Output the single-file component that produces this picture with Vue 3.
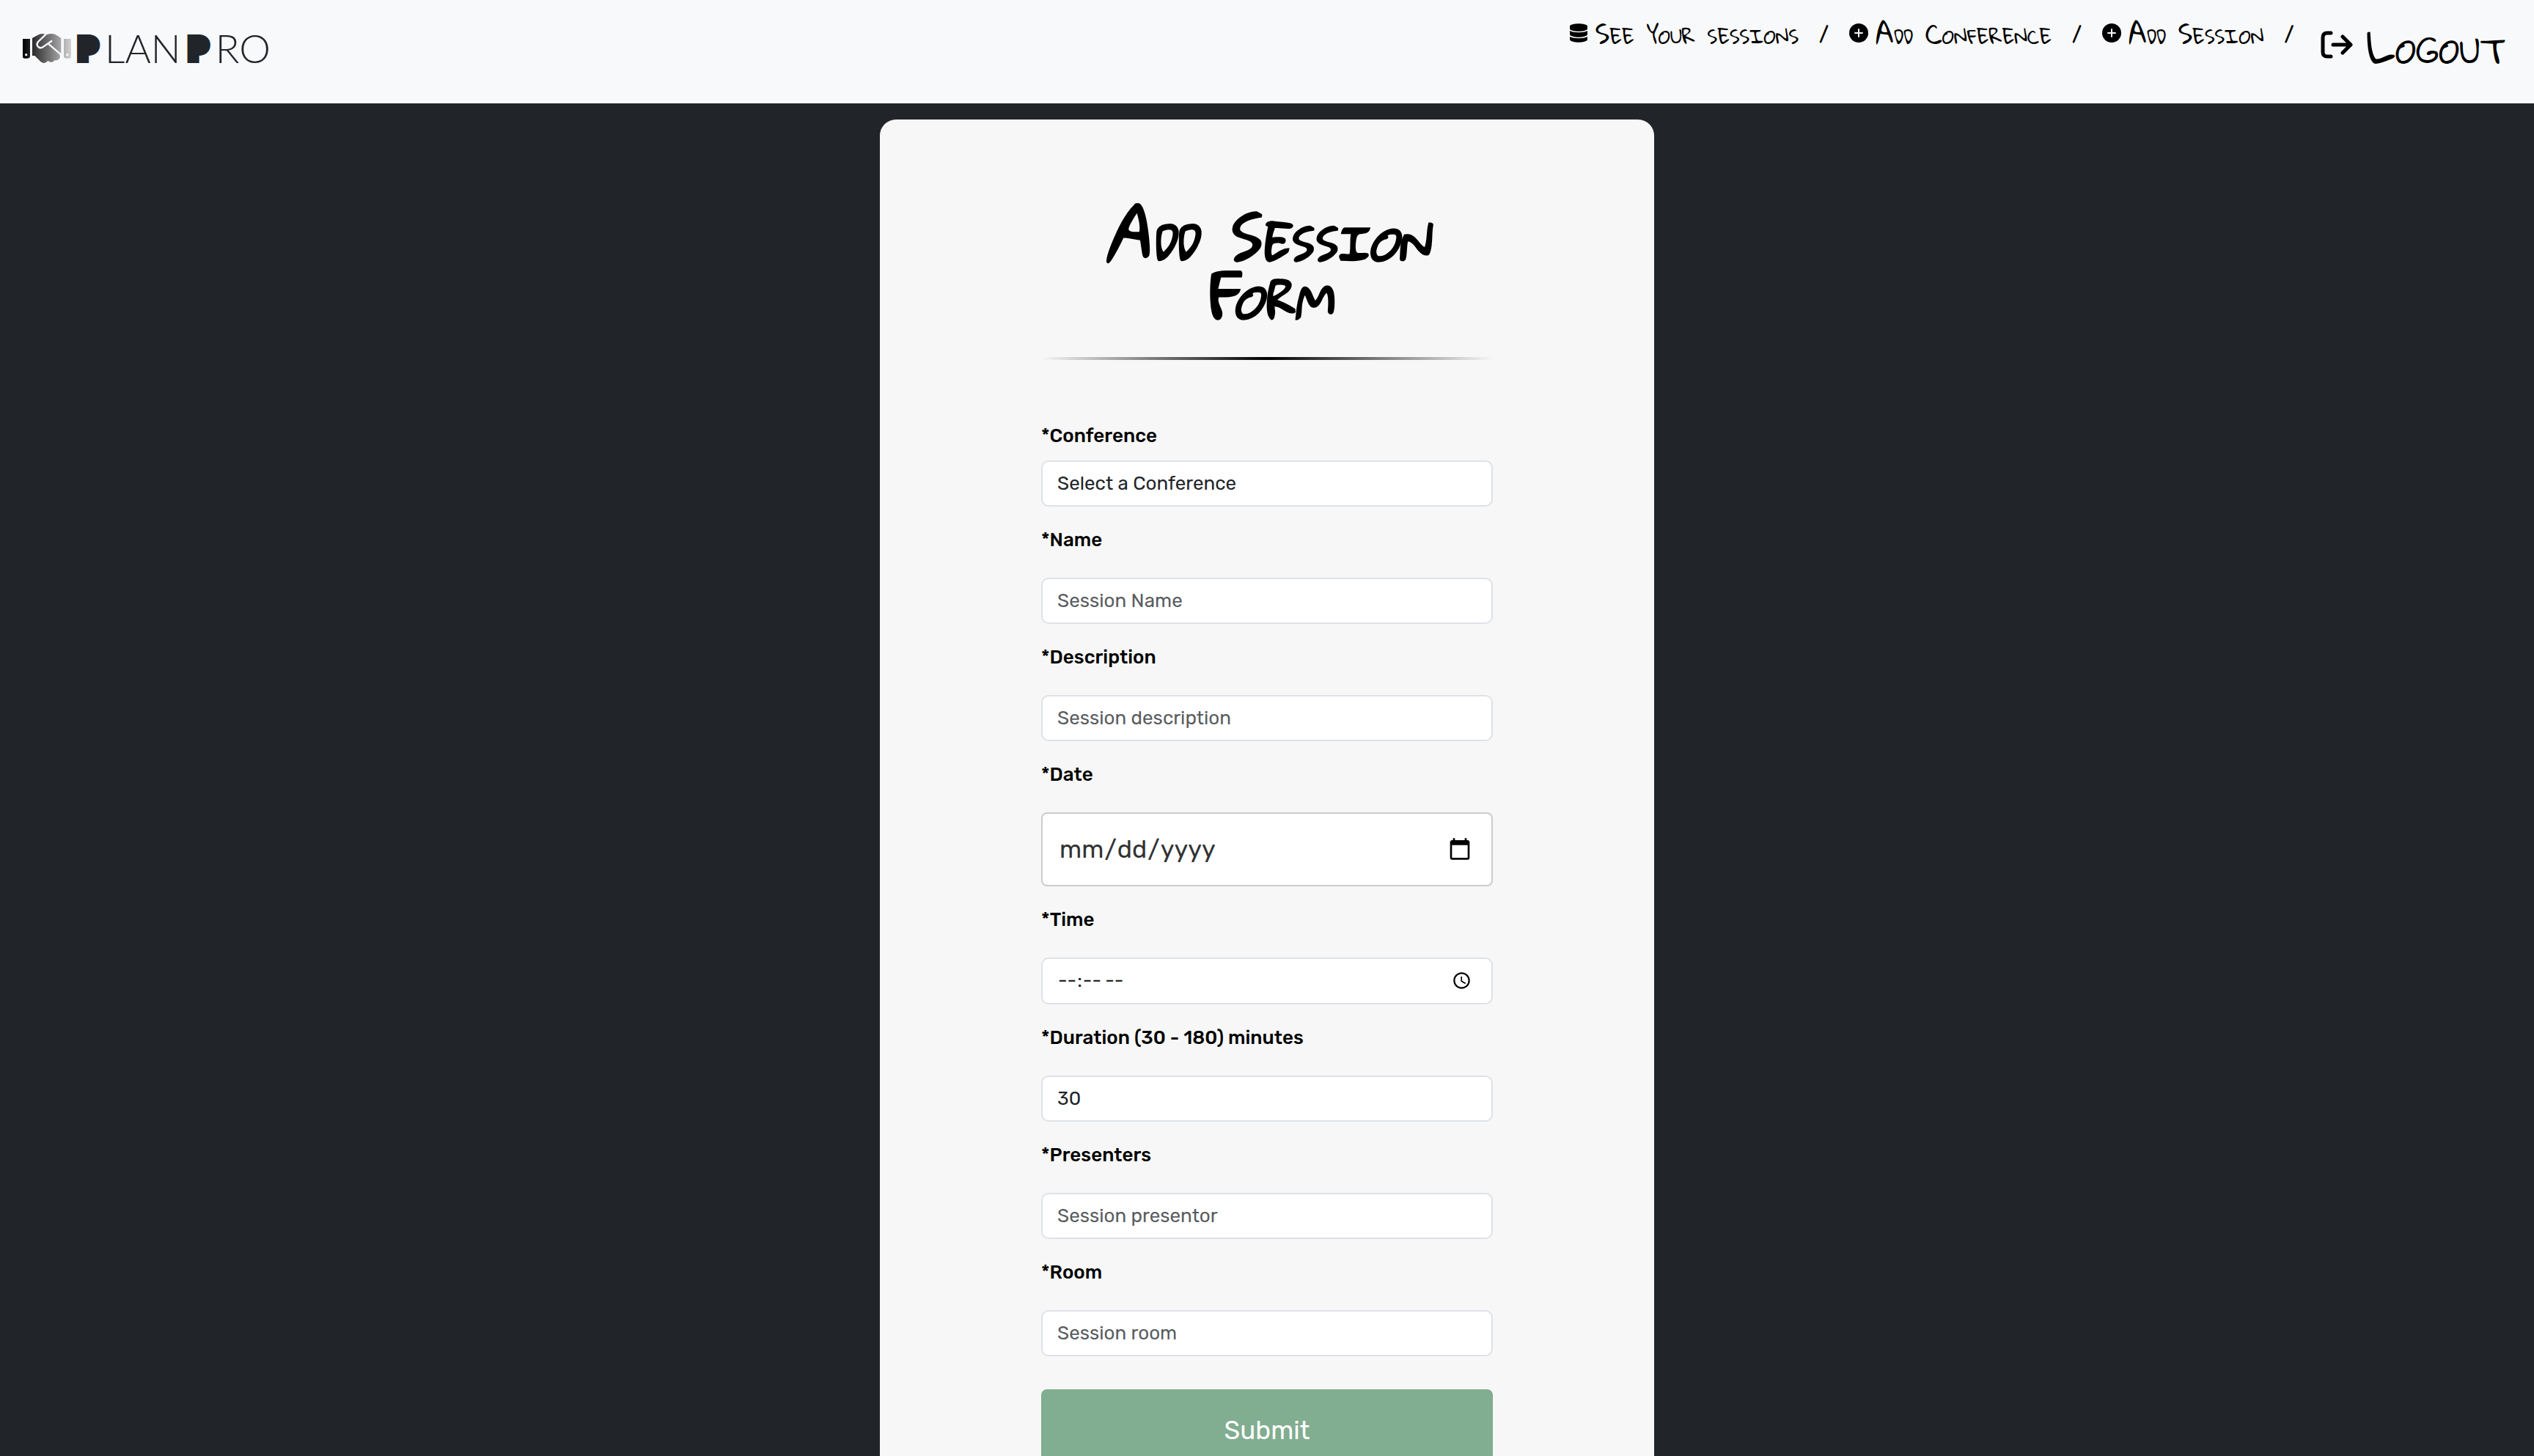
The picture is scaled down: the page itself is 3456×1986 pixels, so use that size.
<script setup>
import { ref } from 'vue'

const conference = ref('')
const duration = ref(30)
</script>

<template>
  <header class="topbar">
    <a class="brand" href="#" aria-label="PlanPro">
      <svg class="brand-mark" viewBox="93 132 198 126" aria-hidden="true">
        <defs>
          <linearGradient id="mark-shade" gradientUnits="userSpaceOnUse" x1="93" y1="0" x2="291" y2="0">
            <stop offset="0" stop-color="#000" />
            <stop offset="1" stop-color="#d2d2d2" />
          </linearGradient>
        </defs>
        <g fill="url(#mark-shade)">
          <path d="M93 156h30v70q0 10-10 10h-12q-8 0-8-8z" />
          <path d="M261 156h30v72q0 8-8 8h-12q-10 0-10-10z" />
          <path d="M132 153L155 140Q169 132 184 137L192 139Q210 131 228 139L250 153V215L243 218Q250 232 240 240Q232 246 224 243Q218 253 208 251Q200 250 196 245Q188 256 178 255Q172 254 166 249L142 225H132Z" />
        </g>
        <g fill="none" stroke="#f8f9fa" stroke-width="7" stroke-linecap="round">
          <path d="M186 139L156 168Q147 180 157 189Q167 197 178 188L211 165" />
          <path d="M200 178L250 221" />
        </g>
        <circle cx="107" cy="221" r="5" fill="#f8f9fa" />
        <circle cx="275" cy="221" r="5" fill="#f8f9fa" />
      </svg>
      <span class="brand-name"><b>P</b><span>LAN</span><b>P</b><span>RO</span></span>
    </a>

    <nav class="links">
      <a class="link" href="#">
        <svg class="icon" viewBox="0 0 24 26" aria-hidden="true">
          <path d="M0 4C0-1 24-1 24 4v3C24 12 0 12 0 7zM0 10c5 3 19 3 24 0v5c-2 5-22 5-24 0zM0 18c5 3 19 3 24 0v4c-2 5-22 5-24 0z" />
        </svg>
        <span>See your sessions</span>
      </a>
      <span class="slash">/</span>
      <a class="link" href="#">
        <svg class="icon" viewBox="0 0 26 26" aria-hidden="true">
          <circle cx="13" cy="13" r="13" />
          <path d="M13 8v10M8 13h10" stroke="#f8f9fa" stroke-width="2" stroke-linecap="round" />
        </svg>
        <span>Add Conference</span>
      </a>
      <span class="slash">/</span>
      <a class="link" href="#">
        <svg class="icon" viewBox="0 0 26 26" aria-hidden="true">
          <circle cx="13" cy="13" r="13" />
          <path d="M13 8v10M8 13h10" stroke="#f8f9fa" stroke-width="2" stroke-linecap="round" />
        </svg>
        <span>Add Session</span>
      </a>
      <span class="slash">/</span>
      <button class="logout" type="button">
        <svg class="logout-icon" viewBox="0 0 44 38" aria-hidden="true">
          <path d="M14 3H9Q3 3 3 9v20q0 6 6 6h5M17 19h24M30 8l11 11-11 11" fill="none" stroke="#000" stroke-width="5" stroke-linecap="round" stroke-linejoin="round" />
        </svg>
        <span>Logout</span>
      </button>
    </nav>
  </header>

  <main class="page">
    <form class="card" @submit.prevent>
      <h1 class="title">Add Session Form</h1>
      <hr class="rule" />

      <div class="field compact">
        <label for="conference">*Conference</label>
        <select id="conference" v-model="conference" class="control">
          <option value="">Select a Conference</option>
        </select>
      </div>
      <div class="field">
        <label for="name">*Name</label>
        <input id="name" class="control" type="text" placeholder="Session Name" />
      </div>
      <div class="field">
        <label for="description">*Description</label>
        <input id="description" class="control" type="text" placeholder="Session description" />
      </div>
      <div class="field">
        <label for="date">*Date</label>
        <input id="date" class="control date" type="date" />
      </div>
      <div class="field">
        <label for="time">*Time</label>
        <input id="time" class="control time" type="time" />
      </div>
      <div class="field">
        <label for="duration">*Duration (30 - 180) minutes</label>
        <input id="duration" v-model="duration" class="control" type="number" min="30" max="180" />
      </div>
      <div class="field">
        <label for="presenters">*Presenters</label>
        <input id="presenters" class="control" type="text" placeholder="Session presentor" />
      </div>
      <div class="field">
        <label for="room">*Room</label>
        <input id="room" class="control" type="text" placeholder="Session room" />
      </div>
      <button class="submit" type="submit">Submit</button>
    </form>
  </main>
</template>

<style>
body {
  margin: 0;
  background: #212529;
}
</style>

<style scoped>
* {
  box-sizing: border-box;
}

.topbar {
  display: flex;
  justify-content: space-between;
  height: 141px;
  padding: 0 38px 0 31px;
  background: #f8f9fa;
  color: #000;
}

.brand {
  display: flex;
  align-items: center;
  gap: 10px;
  height: 132px;
  color: #212529;
  text-decoration: none;
}

.brand-mark {
  width: 66px;
  height: 42px;
}

.brand-name {
  display: flex;
  align-items: center;
  gap: 11px;
  font: 300 54px/60px Lato, sans-serif;
}

.brand-name b {
  font-size: 40px;
  font-weight: 900;
  -webkit-text-stroke: 10px #212529;
}

.links {
  display: flex;
  align-items: flex-start;
  gap: 28px;
  padding-top: 19px;
  font: 400 37px/52px "Gloria Hallelujah", "Comic Neue", Lato, cursive;
  font-variant-caps: small-caps;
}

.link {
  display: flex;
  align-items: center;
  gap: 10px;
  color: #000;
  text-decoration: none;
}

.icon {
  width: 26px;
  height: 26px;
}

.slash {
  font-family: "Comic Neue", Lato, sans-serif;
  font-size: 30px;
  font-weight: 700;
}

.logout {
  display: flex;
  align-items: center;
  gap: 20px;
  margin-left: 8px;
  padding: 0;
  border: 0;
  background: none;
  color: #000;
  font: inherit;
  font-size: 64px;
  line-height: 84px;
}

.logout-icon {
  width: 44px;
  height: 38px;
}

.page {
  display: flex;
  justify-content: center;
  padding: 22px 24px;
}

.card {
  display: flex;
  flex-direction: column;
  width: 100%;
  max-width: 1056px;
  padding: 117px 220px;
  border-radius: 22px;
  background: #f7f7f7;
  font-family: Rubik, Roboto, sans-serif;
}

.title {
  margin: 0;
  color: #000;
  font: italic 400 88px/79px "Gloria Hallelujah", "Comic Neue", Lato, cursive;
  font-variant-caps: small-caps;
  -webkit-text-stroke: 3px #000;
  text-align: center;
}

.rule {
  width: 100%;
  height: 4px;
  margin: 49px 0 84px;
  border: 0;
  background: linear-gradient(to right, transparent, #000, transparent);
}

.field {
  display: flex;
  flex-direction: column;
  gap: 31px;
  margin-bottom: 26px;
}

.field.compact {
  gap: 13px;
}

label {
  color: #000;
  font-size: 26px;
  font-weight: 480;
  line-height: 40px;
}

.control {
  appearance: none;
  width: 100%;
  height: 63px;
  margin: 0;
  padding: 0 24px 0 20px;
  border: 2px solid #dee2e6;
  border-radius: 10px;
  background: #fff;
  color: #212529;
  font-family: inherit;
  font-size: 26px;
  line-height: 40px;
}

.control::placeholder {
  color: #595c5f;
  opacity: 1;
}

.control[type="number"] {
  appearance: textfield;
}

.control.date {
  height: 101px;
  padding: 0 24px 0 22px;
  border-color: #ccc;
  border-radius: 8px;
  color: #333;
  font-size: 34px;
}

.control.time {
  height: 64px;
}

.submit {
  height: 112px;
  margin-top: 19px;
  border: 0;
  border-radius: 8px;
  background: #81ad90;
  color: #fff;
  font-family: inherit;
  font-size: 35px;
}
</style>
